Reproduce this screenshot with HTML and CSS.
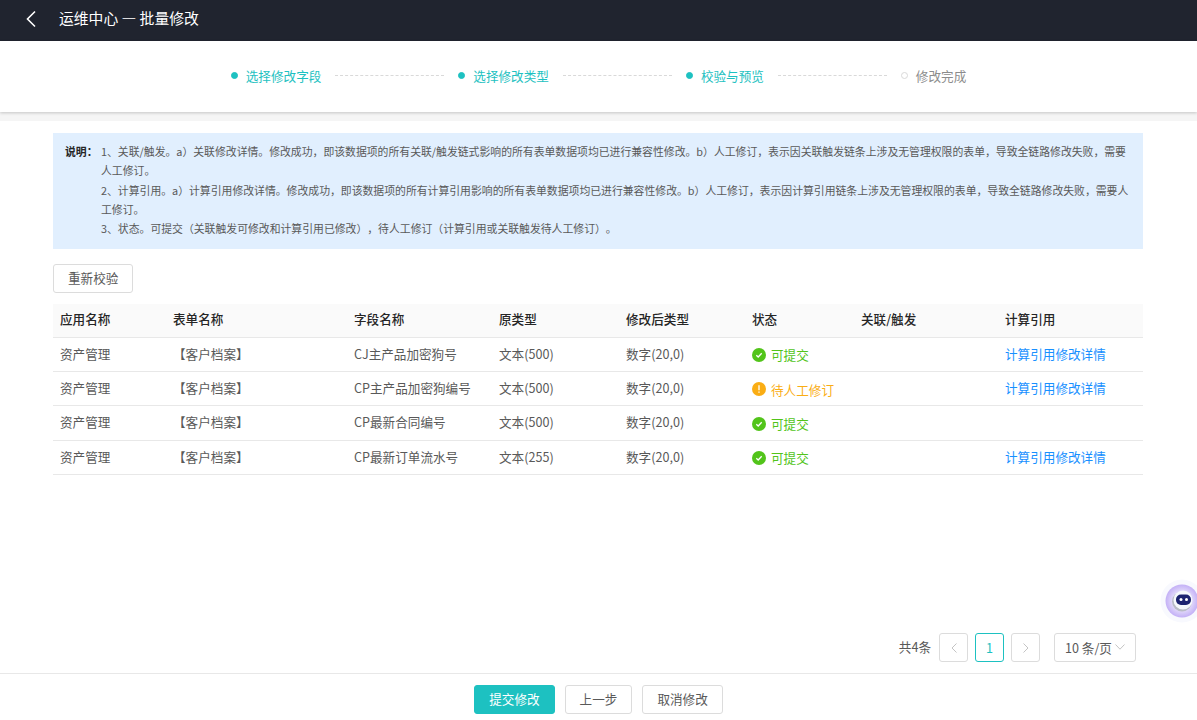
FILE: index.html
```html
<!DOCTYPE html>
<html lang="zh-CN">
<head>
    <meta charset="UTF-8">
    <meta name="viewport" content="width=device-width, initial-scale=1.0">
    <title>运维中心 — 批量修改</title>
    <link rel="stylesheet" href="styles.css">
</head>
<body>
<div class="page">
    <!-- 顶部栏 -->
    <header class="topbar">
        <svg class="back-icon" width="12" height="18" viewBox="0 0 12 18"><path d="M10 1.5 L2.5 9 L10 16.5" fill="none" stroke="#fff" stroke-width="1.6"/></svg>
        <span class="topbar-title">运维中心 — 批量修改</span>
    </header>

    <!-- 步骤条 -->
    <nav class="steps">
        <span class="step done"><i class="dot"></i>选择修改字段</span>
        <span class="step-line"></span>
        <span class="step done"><i class="dot"></i>选择修改类型</span>
        <span class="step-line"></span>
        <span class="step done"><i class="dot"></i>校验与预览</span>
        <span class="step-line"></span>
        <span class="step"><i class="dot"></i>修改完成</span>
    </nav>

    <main class="content">
        <div class="notice">
            <div class="notice-label">说明：</div>
            <div class="notice-body">
                <p>1、关联/触发。a）关联修改详情。修改成功，即该数据项的所有关联/触发链式影响的所有表单数据项均已进行兼容性修改。b）人工修订，表示因关联触发链条上涉及无管理权限的表单，导致全链路修改失败，需要人工修订。</p>
                <p>2、计算引用。a）计算引用修改详情。修改成功，即该数据项的所有计算引用影响的所有表单数据项均已进行兼容性修改。b）人工修订，表示因计算引用链条上涉及无管理权限的表单，导致全链路修改失败，需要人工修订。</p>
                <p>3、状态。可提交（关联触发可修改和计算引用已修改），待人工修订（计算引用或关联触发待人工修订）。</p>
            </div>
        </div>

        <button class="btn recheck">重新校验</button>

        <table class="result-table">
            <colgroup>
                <col class="c1"><col class="c2"><col class="c3"><col class="c4"><col class="c5"><col class="c6"><col class="c7"><col class="c8">
            </colgroup>
            <thead>
                <tr><th>应用名称</th><th>表单名称</th><th>字段名称</th><th>原类型</th><th>修改后类型</th><th>状态</th><th>关联/触发</th><th>计算引用</th></tr>
            </thead>
            <tbody>
                <tr>
                    <td>资产管理</td><td>【客户档案】</td><td>CJ主产品加密狗号</td><td>文本(500)</td><td>数字(20,0)</td>
                    <td><span class="status ok"><svg width="14" height="14" viewBox="0 0 14 14"><circle cx="7" cy="7" r="7" fill="#52c41a"/><path d="M4.3 7.2 L6.2 9 L9.7 5.3" fill="none" stroke="#fff" stroke-width="1.3"/></svg>可提交</span></td>
                    <td></td><td><a class="link">计算引用修改详情</a></td>
                </tr>
                <tr>
                    <td>资产管理</td><td>【客户档案】</td><td>CP主产品加密狗编号</td><td>文本(500)</td><td>数字(20,0)</td>
                    <td><span class="status warn"><svg width="14" height="14" viewBox="0 0 14 14"><circle cx="7" cy="7" r="7" fill="#faad14"/><path d="M7 3.2 V8.2 M7 9.4 V10.8" fill="none" stroke="#fff" stroke-width="1.3"/></svg>待人工修订</span></td>
                    <td></td><td><a class="link">计算引用修改详情</a></td>
                </tr>
                <tr>
                    <td>资产管理</td><td>【客户档案】</td><td>CP最新合同编号</td><td>文本(500)</td><td>数字(20,0)</td>
                    <td><span class="status ok"><svg width="14" height="14" viewBox="0 0 14 14"><circle cx="7" cy="7" r="7" fill="#52c41a"/><path d="M4.3 7.2 L6.2 9 L9.7 5.3" fill="none" stroke="#fff" stroke-width="1.3"/></svg>可提交</span></td>
                    <td></td><td></td>
                </tr>
                <tr>
                    <td>资产管理</td><td>【客户档案】</td><td>CP最新订单流水号</td><td>文本(255)</td><td>数字(20,0)</td>
                    <td><span class="status ok"><svg width="14" height="14" viewBox="0 0 14 14"><circle cx="7" cy="7" r="7" fill="#52c41a"/><path d="M4.3 7.2 L6.2 9 L9.7 5.3" fill="none" stroke="#fff" stroke-width="1.3"/></svg>可提交</span></td>
                    <td></td><td><a class="link">计算引用修改详情</a></td>
                </tr>
            </tbody>
        </table>

        <div class="pagination">
            <span class="total">共4条</span>
            <span class="page-btn"><svg width="8" height="12" viewBox="0 0 8 12"><path d="M6.5 1.5 L2 6 L6.5 10.5" fill="none" stroke="#c4c4c4" stroke-width="1"/></svg></span>
            <span class="page-btn current">1</span>
            <span class="page-btn"><svg width="8" height="12" viewBox="0 0 8 12"><path d="M1.5 1.5 L6 6 L1.5 10.5" fill="none" stroke="#c4c4c4" stroke-width="1"/></svg></span>
            <span class="page-size">10 条/页<svg width="10" height="6" viewBox="0 0 10 6"><path d="M0.5 0.5 L5 5.2 L9.5 0.5" fill="none" stroke="#c4c4c4" stroke-width="1"/></svg></span>
        </div>
    </main>

    <footer class="footer">
        <button class="btn primary">提交修改</button>
        <button class="btn">上一步</button>
        <button class="btn">取消修改</button>
    </footer>

    <!-- 悬浮助手 -->
    <div class="assistant">
        <svg width="46" height="46" viewBox="0 0 46 46">
            <defs>
                <radialGradient id="ring">
                    <stop offset="55%" stop-color="#e4dcfb"/>
                    <stop offset="100%" stop-color="#c3b0f6"/>
                </radialGradient>
            </defs>
            <circle cx="23" cy="23" r="21.5" fill="#f8f9fe"/>
            <circle cx="23" cy="23" r="16.5" fill="url(#ring)"/>
            <circle cx="23" cy="23.5" r="10" fill="#b9bcc6"/>
            <circle cx="24" cy="22" r="9.5" fill="#f6f8fc"/>
            <rect x="17" y="16.5" width="15" height="10.5" rx="5" fill="#1d2370"/>
            <circle cx="22" cy="21.5" r="1.5" fill="#fff"/>
            <circle cx="27.5" cy="21.5" r="1.5" fill="#fff"/>
        </svg>
    </div>
</div>
</body>
</html>
```

FILE: styles.css
```css
* {
    box-sizing: border-box;
}

html, body {
    margin: 0;
    padding: 0;
}

body {
    font-family: "Noto Sans CJK SC", "Noto Sans", sans-serif;
    font-size: 12.6px;
    color: #595959;
    background-color: #fff;
    text-spacing-trim: space-all;
}

.page {
    position: relative;
    display: flex;
    flex-direction: column;
    height: 720px;
    overflow: hidden;
}

.topbar {
    display: flex;
    align-items: center;
    height: 41px;
    flex-shrink: 0;
    padding-left: 25px;
    padding-bottom: 4px;
    background-color: #20242f;
    color: #fff;
}

.topbar-title {
    margin-left: 22px;
    margin-top: -2px;
    font-size: 14.8px;
}

.steps {
    position: relative;
    z-index: 1;
    display: flex;
    align-items: center;
    justify-content: center;
    height: 71px;
    flex-shrink: 0;
    padding-bottom: 2px;
    background-color: #fff;
    box-shadow: 0 1px 3px rgba(0, 0, 0, 0.2);
}

.step {
    display: flex;
    align-items: center;
    color: #8c8c8c;
    white-space: nowrap;
}

.step.done {
    color: #1dc1c1;
}

.dot {
    width: 7px;
    height: 7px;
    margin-right: 8px;
    border: 1px solid #d9d9d9;
    border-radius: 50%;
}

.step.done .dot {
    background-color: #1dc1c1;
    border-color: #1dc1c1;
}

.step-line {
    width: 109px;
    margin: 0 14px;
    border-top: 1px dashed #d9d9d9;
}

.content {
    flex: 1;
    display: flex;
    flex-direction: column;
    padding: 21px 54px 0 53px;
    background: linear-gradient(#f5f5f5 0, #f5f5f5 9px, #fff 9px);
}

.notice {
    display: flex;
    height: 116px;
    padding: 9px 12px;
    background-color: #e1effe;
    font-size: 10.85px;
    line-height: 19.3px;
}

.notice-label {
    width: 36px;
    flex-shrink: 0;
    color: #262626;
    font-weight: 700;
}

.notice-body p {
    margin: 0;
}

.btn {
    height: 29px;
    padding: 0 14px 2px;
    border: 1px solid #dcdcdc;
    border-radius: 3px;
    background-color: #fff;
    color: #595959;
    font-family: inherit;
    font-size: 12.6px;
}

.btn.primary {
    background-color: #1dc1c1;
    border-color: #1dc1c1;
    color: #fff;
}

.recheck {
    align-self: flex-start;
    margin-top: 15px;
}

.result-table {
    width: 1090px;
    margin-top: 11px;
    border-collapse: collapse;
    table-layout: fixed;
}

.c1 { width: 113px; }
.c2 { width: 181px; }
.c3 { width: 145px; }
.c4 { width: 127px; }
.c5 { width: 126px; }
.c6 { width: 109px; }
.c7 { width: 144px; }
.c8 { width: 145px; }

.result-table th {
    height: 33px;
    padding: 0 7px 3px;
    background-color: #fafafa;
    border-bottom: 1px solid #e8e8e8;
    color: #262626;
    font-weight: 500;
    text-align: left;
}

.result-table td {
    height: 34.4px;
    padding: 0 7px 2px;
    border-bottom: 1px solid #e8e8e8;
    white-space: nowrap;
}

.status {
    display: inline-flex;
    align-items: center;
    gap: 5px;
    vertical-align: middle;
    margin-top: 2px;
}

.status.ok {
    color: #52c41a;
}

.status.warn {
    color: #faad14;
}

.link {
    color: #1890ff;
}

.pagination {
    display: flex;
    align-items: center;
    justify-content: flex-end;
    margin-top: auto;
    margin-bottom: 11px;
    padding-right: 7px;
}

.total {
    margin-right: 8px;
    padding-bottom: 2px;
}

.page-btn {
    display: flex;
    align-items: center;
    justify-content: center;
    width: 29px;
    height: 29px;
    margin-right: 7px;
    border: 1px solid #dcdcdc;
    border-radius: 3px;
}

.page-btn.current {
    border-color: #1dc1c1;
    color: #1dc1c1;
}

.page-size {
    display: flex;
    align-items: center;
    justify-content: space-between;
    width: 82px;
    height: 29px;
    margin-left: 7px;
    padding: 0 10px 1px;
    border: 1px solid #dcdcdc;
    border-radius: 3px;
}

.footer {
    display: flex;
    justify-content: center;
    gap: 10px;
    height: 47px;
    flex-shrink: 0;
    padding-top: 11px;
    border-top: 1px solid #e8e8e8;
}

.assistant {
    position: absolute;
    right: -8px;
    top: 578px;
    width: 46px;
    height: 46px;
}
```
